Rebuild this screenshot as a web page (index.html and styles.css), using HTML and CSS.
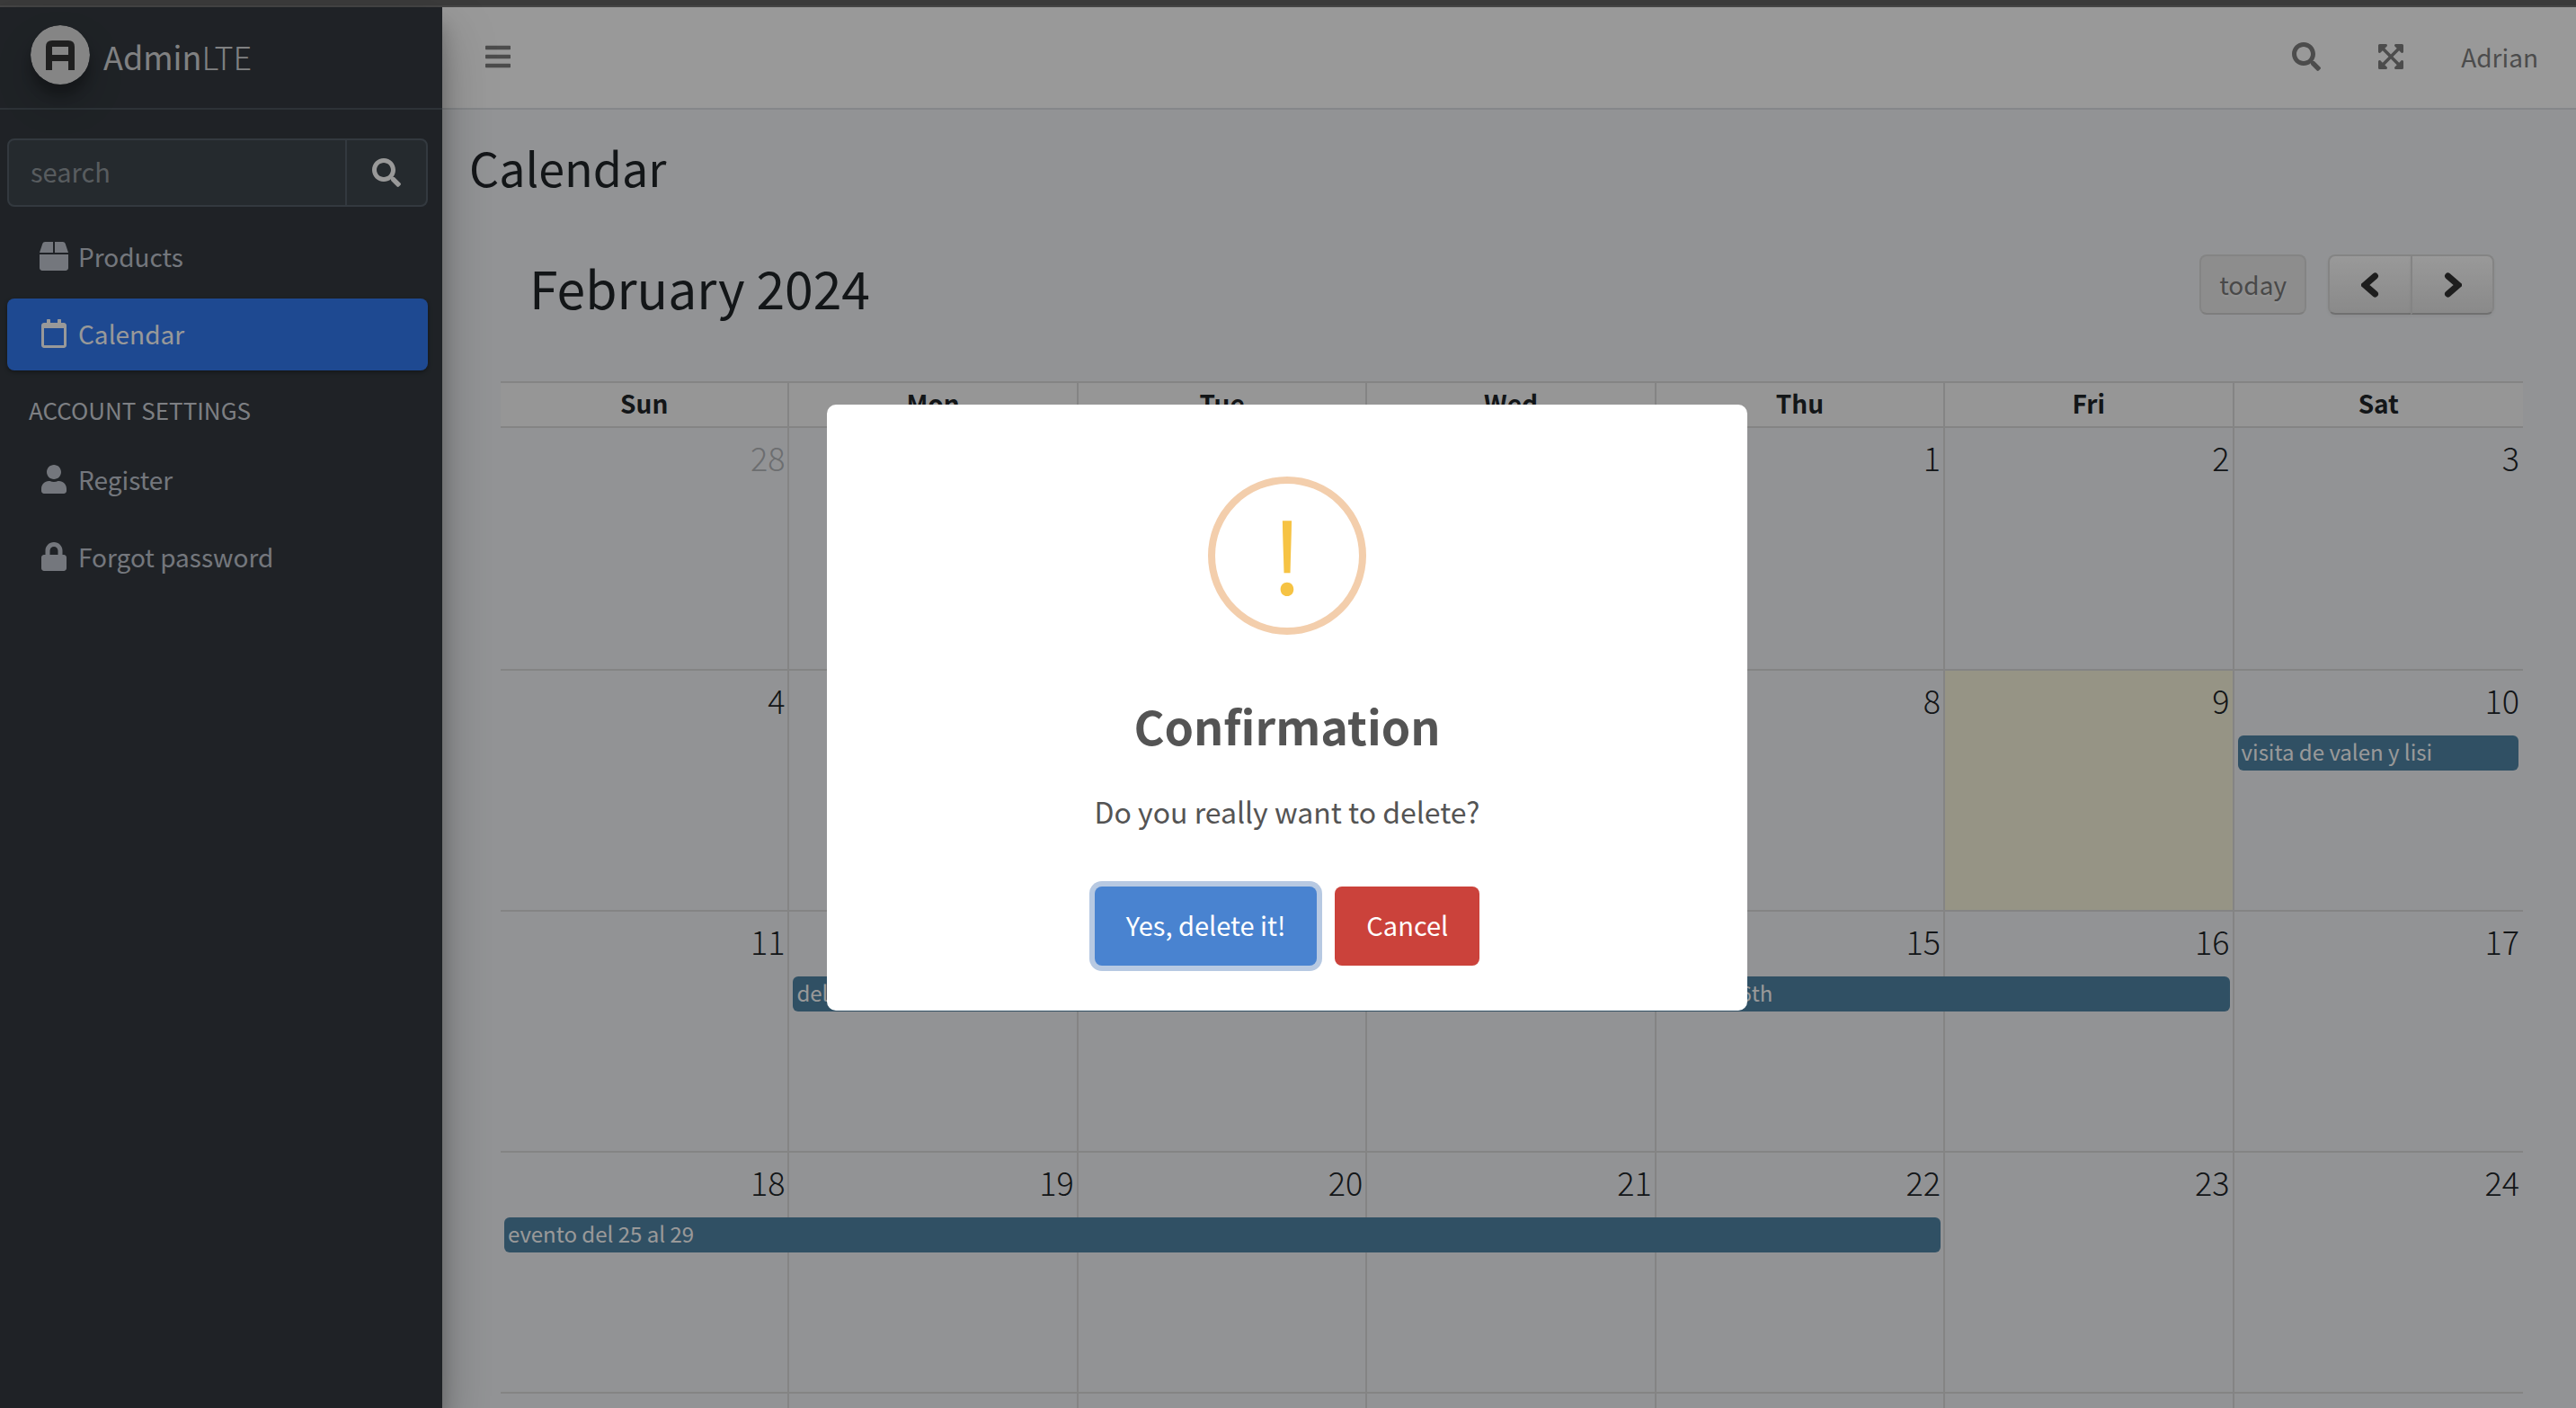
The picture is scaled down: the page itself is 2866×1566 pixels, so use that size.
FILE: index.html
```html
<!DOCTYPE html>
<html lang="en">
<head>
<meta charset="utf-8">
<title>AdminLTE | Calendar</title>
<link rel="stylesheet" href="styles.css">
</head>
<body>
<svg class="sprite" aria-hidden="true">
  <symbol id="i-search" viewBox="0 0 512 512"><path d="M505 442.7L405.3 343c-4.5-4.5-10.6-7-17-7H372c27.6-35.3 44-79.7 44-128C416 93.1 322.9 0 208 0S0 93.1 0 208s93.1 208 208 208c48.3 0 92.7-16.4 128-44v16.3c0 6.4 2.5 12.5 7 17l99.7 99.7c9.4 9.4 24.6 9.4 33.9 0l28.3-28.3c9.4-9.4 9.4-24.6.1-34zM208 336c-70.7 0-128-57.2-128-128 0-70.7 57.2-128 128-128 70.7 0 128 57.2 128 128 0 70.7-57.2 128-128 128z"/></symbol>
  <symbol id="i-box" viewBox="0 0 512 512"><path d="M509.5 184.6L458.9 32.8C452.4 13.2 434.1 0 413.4 0H272v192h238.7c-.4-2.5-.4-5-1.2-7.4zM240 0H98.6c-20.7 0-39 13.2-45.5 32.8L2.5 184.6c-.8 2.4-.8 4.9-1.2 7.4H240V0zM0 224v240c0 26.5 21.5 48 48 48h416c26.5 0 48-21.5 48-48V224H0z"/></symbol>
  <symbol id="i-calendar" viewBox="0 0 448 512"><path d="M400 64h-48V12c0-6.6-5.4-12-12-12h-40c-6.6 0-12 5.4-12 12v52H160V12c0-6.6-5.4-12-12-12h-40c-6.6 0-12 5.4-12 12v52H48C21.5 64 0 85.5 0 112v352c0 26.5 21.5 48 48 48h352c26.5 0 48-21.5 48-48V112c0-26.5-21.5-48-48-48zm-6 400H54c-3.3 0-6-2.7-6-6V160h352v298c0 3.3-2.7 6-6 6z"/></symbol>
  <symbol id="i-user" viewBox="0 0 448 512"><path d="M224 256c70.7 0 128-57.3 128-128S294.7 0 224 0 96 57.3 96 128s57.3 128 128 128zm89.6 32h-16.7c-22.2 10.2-46.9 16-72.9 16s-50.6-5.8-72.9-16h-16.7C60.2 288 0 348.2 0 422.4V464c0 26.5 21.5 48 48 48h352c26.5 0 48-21.5 48-48v-41.6c0-74.2-60.2-134.4-134.4-134.4z"/></symbol>
  <symbol id="i-lock" viewBox="0 0 448 512"><path d="M400 224h-24v-72C376 68.2 307.8 0 224 0S72 68.2 72 152v72H48c-26.5 0-48 21.5-48 48v192c0 26.5 21.5 48 48 48h352c26.5 0 48-21.5 48-48V272c0-26.5-21.5-48-48-48zm-104 0H152v-72c0-39.7 32.3-72 72-72s72 32.3 72 72v72z"/></symbol>
  <symbol id="i-bars" viewBox="0 0 448 512"><path d="M16 132h416c8.8 0 16-7.2 16-16V76c0-8.8-7.2-16-16-16H16C7.2 60 0 67.2 0 76v40c0 8.8 7.2 16 16 16zm0 160h416c8.8 0 16-7.2 16-16v-40c0-8.8-7.2-16-16-16H16c-8.8 0-16 7.2-16 16v40c0 8.8 7.2 16 16 16zm0 160h416c8.8 0 16-7.2 16-16v-40c0-8.8-7.2-16-16-16H16c-8.8 0-16 7.2-16 16v40c0 8.8 7.2 16 16 16z"/></symbol>
  <symbol id="i-expand" viewBox="0 0 448 512"><path d="M448 344v112a24 24 0 0 1-24 24H312c-21.400 0-32.100-25.900-17-41l36.200-36.200L224 295.600 116.800 402.900 153 439c15.100 15.100 4.400 41-17 41H24a24 24 0 0 1-24-24V344c0-21.400 25.900-32.100 41-17l36.200 36.200L184.500 256 77.200 148.700 41 185c-15.100 15.100-41 4.400-41-17V56a24 24 0 0 1 24-24h112c21.400 0 32.100 25.900 17 41l-36.200 36.200L224 216.400l107.200-107.300L295 73c-15.100-15.100-4.400-41 17-41h112a24 24 0 0 1 24 24v112c0 21.400-25.900 32.100-41 17l-36.200-36.200L263.500 256l107.300 107.300L407 327.100c15.100-15.200 41-4.500 41 16.900z"/></symbol>
</svg>

<div class="window-edge"></div>

<div class="wrapper">
  <aside class="sidebar">
    <a class="brand" href="#">
      <svg class="brand-logo" viewBox="0 0 66 66" aria-hidden="true">
        <circle cx="33" cy="33" r="33" fill="#dedede"/>
        <path fill="#343434" fill-rule="evenodd" d="M17 50V24q0-7 7-7h18q7 0 7 7v26h-7V40H24v10zM24 24v9h18v-9z"/>
      </svg>
      <span class="brand-text"><b>Admin</b>LTE</span>
    </a>
    <form class="side-search">
      <input class="side-search-input" type="search" placeholder="search" aria-label="search">
      <button class="side-search-button" type="button" aria-label="Search menu"><svg class="icon"><use href="#i-search"/></svg></button>
    </form>
    <nav class="side-nav">
      <a class="side-link" href="#"><svg class="icon"><use href="#i-box"/></svg>Products</a>
      <a class="side-link active" href="#"><svg class="icon"><use href="#i-calendar"/></svg>Calendar</a>
      <div class="side-header">ACCOUNT SETTINGS</div>
      <a class="side-link" href="#"><svg class="icon"><use href="#i-user"/></svg>Register</a>
      <a class="side-link" href="#"><svg class="icon"><use href="#i-lock"/></svg>Forgot password</a>
    </nav>
  </aside>

  <div class="page">
    <header class="navbar">
      <button class="nav-button" type="button" aria-label="Toggle menu"><svg class="icon"><use href="#i-bars"/></svg></button>
      <div class="nav-right">
        <button class="nav-button" type="button" aria-label="Search"><svg class="icon"><use href="#i-search"/></svg></button>
        <button class="nav-button" type="button" aria-label="Full screen"><svg class="icon"><use href="#i-expand"/></svg></button>
        <a class="nav-user" href="#">Adrian</a>
      </div>
    </header>

    <main class="content">
      <h1 class="page-title">Calendar</h1>
      <section class="calendar">
        <div class="toolbar">
          <h2 class="month">February 2024</h2>
          <div class="toolbar-buttons">
            <button class="cal-button today-button" type="button" disabled>today</button>
            <div class="button-group">
              <button class="cal-button arrow" type="button" aria-label="prev"><svg class="chevron" viewBox="0 0 20 28"><path d="M15.500 4 4 14l11.500 10"/></svg></button>
              <button class="cal-button arrow" type="button" aria-label="next"><svg class="chevron" viewBox="0 0 20 28"><path d="M4.500 4 16 14 4.500 24"/></svg></button>
            </div>
          </div>
        </div>
        <table class="month-grid">
          <thead>
            <tr><th>Sun</th><th>Mon</th><th>Tue</th><th>Wed</th><th>Thu</th><th>Fri</th><th>Sat</th></tr>
          </thead>
          <tbody>
            <tr><td class="other">28</td><td class="other">29</td><td class="other">30</td><td class="other">31</td><td>1</td><td>2</td><td>3</td></tr>
            <tr><td>4</td><td>5</td><td>6</td><td>7</td><td>8</td><td class="today">9</td><td>10<a class="event" href="#">visita de valen y lisi</a></td></tr>
            <tr><td>11</td><td>12<a class="event span-5" href="#"><span class="event-range"><span>del</span> <span>16th</span></span></a></td><td>13</td><td>14</td><td>15</td><td>16</td><td>17</td></tr>
            <tr><td>18<a class="event span-5" href="#">evento del 25 al 29</a></td><td>19</td><td>20</td><td>21</td><td>22</td><td>23</td><td>24</td></tr>
            <tr><td></td><td></td><td></td><td></td><td></td><td></td><td></td></tr>
          </tbody>
        </table>
      </section>
    </main>
  </div>
</div>

<div class="backdrop">
  <div class="modal" role="dialog" aria-modal="true" aria-labelledby="modal-title">
    <div class="modal-icon">!</div>
    <h2 class="modal-title" id="modal-title">Confirmation</h2>
    <p class="modal-text">Do you really want to delete?</p>
    <div class="modal-actions">
      <button class="modal-button confirm" type="button">Yes, delete it!</button>
      <button class="modal-button cancel" type="button">Cancel</button>
    </div>
  </div>
</div>
</body>
</html>
```
FILE: styles.css
```css
* { box-sizing: border-box; }

body {
  display: flex;
  flex-direction: column;
  height: 100vh;
  margin: 0;
  overflow: hidden;
  background: #f4f6f9;
  color: #212529;
  font-family: "Noto Sans CJK SC", "Noto Sans", sans-serif;
  font-size: 28px;
  line-height: 44px;
}

button, input { font: inherit; }
button { padding: 0; border: 0; background: none; cursor: pointer; }
a { color: inherit; text-decoration: none; }
h1, h2, p { margin: 0; font-weight: 400; }

.sprite { position: absolute; width: 0; height: 0; }
.icon { display: block; width: 32px; height: 32px; fill: currentColor; }

.window-edge {
  flex: none;
  height: 8px;
  border-bottom: 2px solid #454545;
  background: #3b3b3b;
}

.wrapper { display: flex; flex: 1; min-height: 0; }

/* Sidebar */
.sidebar {
  z-index: 1;
  flex: none;
  width: 492px;
  background: #343a40;
  color: #c2c7d0;
  box-shadow: 0 28px 56px rgba(0, 0, 0, .25), 0 20px 20px rgba(0, 0, 0, .22);
}

.brand {
  display: flex;
  align-items: center;
  gap: 15px;
  height: 114px;
  padding: 0 34px 6px;
  border-bottom: 2px solid #4b545c;
  color: #d6d8d9;
  font-size: 36px;
  font-weight: 300;
}
.brand-text { padding-top: 2px; }
.brand b { font-weight: 400; }
.brand-logo {
  width: 66px;
  height: 66px;
  border-radius: 50%;
  box-shadow: 0 20px 40px rgba(0, 0, 0, .19), 0 12px 12px rgba(0, 0, 0, .23);
}

.side-search {
  display: flex;
  height: 76px;
  margin: 32px 16px 16px 8px;
  border: 2px solid #56606a;
  border-radius: 8px;
  background: #3f474e;
}
.side-search-input {
  flex: 1;
  min-width: 0;
  padding: 0 24px 4px;
  border: 0;
  outline: 0;
  background: none;
  color: #fff;
  font-size: 29px;
}
.side-search-input::placeholder { color: #939a9f; opacity: 1; }
.side-search-button {
  display: grid;
  place-items: center;
  width: 90px;
  border-left: 2px solid #56606a;
  color: #fff;
}

.side-nav {
  display: flex;
  flex-direction: column;
  gap: 6px;
  padding: 0 16px 0 8px;
}
.side-link {
  display: flex;
  align-items: center;
  gap: 11px;
  height: 80px;
  padding: 0 36px 2px;
  border-radius: 8px;
}
.side-link.active {
  background: #337af2;
  color: #fff;
  box-shadow: 0 2px 6px rgba(0, 0, 0, .12), 0 2px 4px rgba(0, 0, 0, .24);
}
.side-header { height: 70px; padding: 16px 24px 0; font-size: 26px; color: #d0d4db; }

/* Top bar */
.page { flex: 1; min-width: 0; }
.navbar {
  display: flex;
  align-items: center;
  justify-content: space-between;
  height: 114px;
  padding: 0 42px 2px 46px;
  border-bottom: 2px solid #dee2e6;
  background: #fff;
  color: #7f7f7f;
}
.nav-button { color: inherit; }
.nav-right { display: flex; align-items: center; gap: 62px; }

/* Calendar */
.content { padding: 32px 59px 0 65px; }
.page-title { margin-left: -35px; font-size: 52px; line-height: 64px; }
.calendar { padding-top: 65px; }
.toolbar {
  display: flex;
  justify-content: space-between;
  height: 141px;
  padding: 0 32px;
}
.month { font-size: 57px; line-height: 72px; }
.toolbar-buttons { display: flex; gap: 24px; }
.cal-button {
  height: 67px;
  border: 2px solid #dcdddc;
  border-bottom-color: #bbb;
  border-radius: 8px;
  background: linear-gradient(#fff, #e6e6e6);
  color: #333;
  box-shadow: 0 2px 4px rgba(0, 0, 0, .05);
}
.today-button {
  padding: 0 20px 2px;
  border-bottom-color: #d0d0d0;
  background: #ebebeb;
  color: #7b7b7b;
  text-shadow: 0 2px 2px rgba(255, 255, 255, .75);
  box-shadow: none;
}
.button-group { display: flex; }
.arrow { display: grid; place-items: center; width: 93px; }
.arrow:first-child { width: 92px; border-right: 0; border-radius: 8px 0 0 8px; }
.arrow:last-child { border-radius: 0 8px 8px 0; }
.chevron { width: 20px; height: 28px; fill: none; stroke: #333; stroke-width: 7; stroke-linecap: round; stroke-linejoin: miter; }

.month-grid {
  width: 100%;
  table-layout: fixed;
  border-collapse: separate;
  border-spacing: 0;
}
.month-grid th, .month-grid td {
  border-top: 2px solid #ddd;
  border-right: 2px solid #ddd;
}
.month-grid th:last-child, .month-grid td:last-child { border-right: 0; }
.month-grid th {
  height: 50px;
  padding: 0 0 4px;
  background: #fafafa;
  font-weight: 700;
}
.month-grid td {
  --column: calc(100% + 2px);
  position: relative;
  height: 268px;
  padding: 8px 3px;
  font-size: 36px;
  font-weight: 300;
  line-height: 48px;
  text-align: right;
  vertical-align: top;
}
.month-grid tbody tr:first-child td { height: 270px; }
.month-grid td:last-child { --column: 100%; padding-right: 4px; }
.month-grid .other { color: #b4b7bb; }
.month-grid .today { background: #faf7de; }

/* Events lie over the day cells they cover */
.event {
  position: absolute;
  top: 72px;
  left: 4px;
  width: calc(var(--column) - 9px);
  height: 39px;
  padding: 0 4px;
  border-radius: 6px;
  background: #5085a7;
  color: #fff;
  font-size: 24px;
  font-weight: 400;
  line-height: 36px;
  text-align: left;
  white-space: nowrap;
  z-index: 1;
}
.span-5 { width: calc(5 * var(--column) - 9px); }
.event-range { display: flex; justify-content: space-between; width: 1086px; }

/* Dialog */
.backdrop {
  position: fixed;
  inset: 8px 0 0;
  z-index: 10;
  display: grid;
  place-items: center;
  padding-right: 2px;
  background: rgba(0, 0, 0, .4);
}
.modal {
  display: flex;
  flex-direction: column;
  align-items: center;
  width: 1024px;
  max-width: 100%;
  padding: 80px 32px 50px;
  border-radius: 10px;
  background: #fff;
  color: #545454;
}
.modal-icon {
  width: 176px;
  height: 176px;
  border: 8px solid #f3ceac;
  border-radius: 50%;
  color: #f6c344;
  font-size: 110px;
  line-height: 152px;
  text-align: center;
}
.modal-title { margin-top: 64px; font-size: 52px; font-weight: 700; line-height: 74px; }
.modal-text { margin-top: 36px; font-size: 32px; }
.modal-actions { display: flex; gap: 20px; margin-top: 62px; }
.modal-button {
  height: 88px;
  padding: 0 35px 4px;
  border-radius: 8px;
  color: #fff;
  font-size: 29px;
}
.confirm { background: #4983d0; box-shadow: 0 0 0 6px #b7c9e2; }
.cancel { background: #cb423b; }
```
